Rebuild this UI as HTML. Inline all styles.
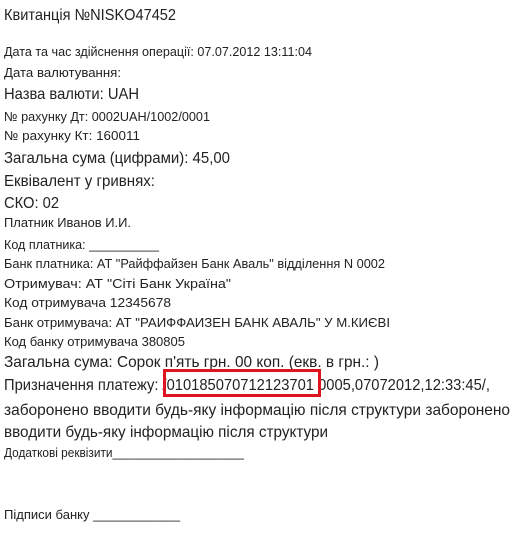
<!DOCTYPE html>
<html><head><meta charset="utf-8"><style>
html,body{margin:0;padding:0;background:#fff;width:524px;height:537px;overflow:hidden}
svg{display:block}
text{font-family:"Liberation Sans",sans-serif;fill:#222}
.s{font-size:13px}.b{font-size:16px}
</style></head><body>
<svg width="524" height="537" xmlns="http://www.w3.org/2000/svg">
<text class="b" x="4" y="20" textLength="172" lengthAdjust="spacingAndGlyphs">Квитанція №NISKO47452</text>
<text class="s" x="4" y="56" textLength="308" lengthAdjust="spacingAndGlyphs">Дата та час здійснення операції: 07.07.2012 13:11:04</text>
<text class="s" x="4" y="77" textLength="117" lengthAdjust="spacingAndGlyphs">Дата валютування:</text>
<text class="b" x="4" y="99" textLength="135" lengthAdjust="spacingAndGlyphs">Назва валюти: UAH</text>
<text class="s" x="4" y="121" textLength="206" lengthAdjust="spacingAndGlyphs">№ рахунку Дт: 0002UAH/1002/0001</text>
<text class="s" x="4" y="140" textLength="136" lengthAdjust="spacingAndGlyphs">№ рахунку Кт: 160011</text>
<text class="b" x="4" y="163" textLength="226" lengthAdjust="spacingAndGlyphs">Загальна сума (цифрами): 45,00</text>
<text class="b" x="4" y="186" textLength="151" lengthAdjust="spacingAndGlyphs">Еквівалент у гривнях:</text>
<text class="b" x="4" y="208" textLength="55" lengthAdjust="spacingAndGlyphs">СКО: 02</text>
<text class="s" x="4" y="227" textLength="127" lengthAdjust="spacingAndGlyphs">Платник Иванов И.И.</text>
<text class="s" x="4" y="249" textLength="155" lengthAdjust="spacingAndGlyphs">Код платника: __________</text>
<text class="s" x="4" y="268" textLength="381" lengthAdjust="spacingAndGlyphs">Банк платника: АТ "Райффайзен Банк Аваль" відділення N 0002</text>
<text class="s" x="4" y="288" textLength="227" lengthAdjust="spacingAndGlyphs">Отримувач:  АТ "Сіті Банк Україна"</text>
<text class="s" x="4" y="307" textLength="167" lengthAdjust="spacingAndGlyphs">Код отримувача 12345678</text>
<text class="s" x="4" y="327" textLength="386" lengthAdjust="spacingAndGlyphs">Банк отримувача: АТ "РАИФФАИЗЕН БАНК АВАЛЬ" У М.КИЄВІ</text>
<text class="s" x="4" y="346" textLength="181" lengthAdjust="spacingAndGlyphs">Код банку отримувача 380805</text>
<text class="b" x="4" y="367" textLength="375" lengthAdjust="spacingAndGlyphs">Загальна сума: Сорок п'ять грн. 00 коп. (екв. в грн.: )</text>
<text class="b" x="4" y="390" textLength="486" lengthAdjust="spacingAndGlyphs">Призначення платежу: /010185070712123701 0005,07072012,12:33:45/,</text>
<text class="b" x="4" y="415" textLength="506" lengthAdjust="spacingAndGlyphs">заборонено вводити будь-яку інформацію після структури заборонено</text>
<text class="b" x="4" y="437" textLength="324" lengthAdjust="spacingAndGlyphs">вводити будь-яку інформацію після структури</text>
<text class="s" x="4" y="457" textLength="240" lengthAdjust="spacingAndGlyphs">Додаткові реквізити____________________</text>
<text class="s" x="4" y="519" textLength="176" lengthAdjust="spacingAndGlyphs">Підписи банку ____________</text>
<rect x="164.5" y="370.5" width="155" height="25" fill="none" stroke="#e0141e" stroke-width="3"/>
</svg>
</body></html>
